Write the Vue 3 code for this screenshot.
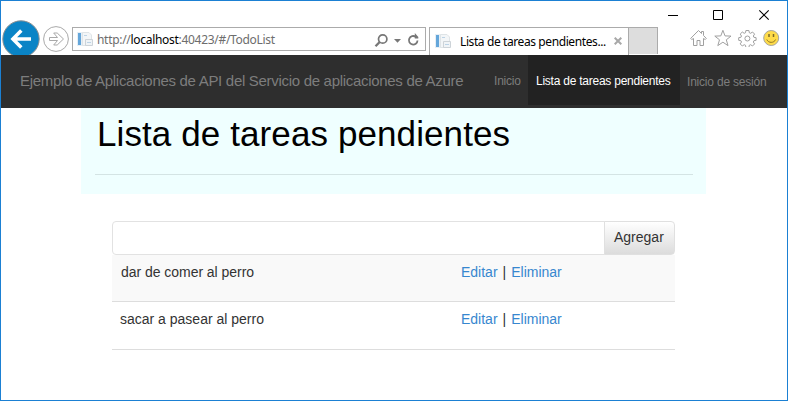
<script setup>
import { ref } from 'vue'

const draft = ref('')
const tasks = [
  { id: 1, name: 'dar de comer al perro' },
  { id: 2, name: 'sacar a pasear al perro' },
]
</script>

<template>
  <div class="window">
    <header class="chrome">
      <div class="back">
        <svg width="38" height="35" viewBox="0 0 38 35">
          <circle cx="19" cy="19" r="18.2" fill="#0a84c6" stroke="#8b8f92" stroke-width="1" />
          <path d="M29 19H12M19.300 10.600L10.900 19l8.400 8.400" fill="none" stroke="#fff" stroke-width="3.500" />
        </svg>
      </div>
      <svg class="forward" width="26" height="26" viewBox="0 0 26 26" fill="none" stroke="#a9a9a9">
        <circle cx="13" cy="13" r="12.400" />
        <path d="M6.500 11.500h8l-3.800-4.500h3.500l6.300 6-6.300 6h-3.500l3.800-4.500h-8z" />
      </svg>
      <div class="address">
        <svg class="page" width="17" height="17" viewBox="0 0 17 17">
          <path d="M0 1h6v14H0z" fill="#e6eff6" />
          <path d="M1 2h3v12H1z" fill="#64a6da" />
          <path d="M5.500 1.500h6.500l2.500 2.500v10.500h-9z" fill="#f3f6f8" stroke="#dfe4e7" />
          <path d="M7 4.500h3" stroke="#bcd3e6" />
          <path d="M8.500 8.500h7v6h-7z" fill="#f0f4f7" stroke="#cdd3d8" />
          <path d="M10 11.500h4" stroke="#bcd3e6" />
        </svg>
        <span class="url">http://<b>localhost</b>:40423/#/TodoList</span>
        <svg class="tools" width="48" height="16" viewBox="0 0 48 16" fill="none" stroke="#777">
          <circle cx="8.700" cy="6" r="4.200" stroke-width="1.700" />
          <path d="M5.700 9L1.500 13.300" stroke-width="2.300" />
          <path d="M20 6h7l-3.500 3.700z" fill="#777" stroke="none" />
          <path d="M41.700 3.800A4.300 4.300 0 1 0 43.500 7.500" stroke-width="1.800" />
          <path d="M40.800 0V5.500H44.300V4z" fill="#777" stroke="none" />
        </svg>
      </div>
      <div class="tab">
        <svg class="page" width="17" height="17" viewBox="0 0 17 17">
          <path d="M0 1h6v14H0z" fill="#e6eff6" />
          <path d="M1 2h3v12H1z" fill="#64a6da" />
          <path d="M5.500 1.500h6.500l2.500 2.500v10.500h-9z" fill="#f3f6f8" stroke="#dfe4e7" />
          <path d="M7 4.500h3" stroke="#bcd3e6" />
          <path d="M8.500 8.500h7v6h-7z" fill="#f0f4f7" stroke="#cdd3d8" />
          <path d="M10 11.500h4" stroke="#bcd3e6" />
        </svg>
        <span class="tab-title">Lista de tareas pendientes...</span>
        <svg class="tab-close" width="8" height="8" viewBox="0 0 8 8">
          <path d="M.7.7l6.600 6.600M7.300.7L.7 7.300" stroke="#a8a8a8" stroke-width="2" />
        </svg>
      </div>
      <div class="new-tab"></div>
      <div class="right">
        <svg class="controls" width="102" height="12" viewBox="0 0 102 12" fill="none" stroke="#000">
          <path d="M0 6.500h10" />
          <path d="M45.500 1.500h9v9h-9z" />
          <path d="M91.300 1.300l9.400 9.400M100.700 1.300l-9.400 9.400" stroke-width="1.100" />
        </svg>
        <svg class="actions" width="90" height="18" viewBox="0 0 90 18" fill="none" stroke="#a0a0a0">
          <path d="M.7 9.400L8.500 1.500l3 3V2.500h2v4l2.800 2.900-1 1.100-1.800-1v7h-3.500v-5H7v5H3.500v-7l-1.800 1z" />
          <path d="M32.900 1.300l2.100 5.600 6 .200-4.700 3.700 1.700 5.800-5.100-3.400-5.100 3.400 1.700-5.800-4.700-3.700 6-.2z" />
          <path d="M55.900 1.500h3l.4 2.200 1.300.6 1.900-1.300 2.100 2.100-1.300 1.900.6 1.300 2.200.4v2.600l-2.200.4-.6 1.300 1.300 1.900-2.100 2.100-1.900-1.300-1.300.6-.4 2.200h-3l-.4-2.200-1.300-.6-1.900 1.300-2.100-2.100 1.300-1.900-.6-1.300-2.200-.4V8.700l2.200-.4.6-1.300-1.300-1.900L52.300 3l1.900 1.300 1.300-.6z" />
          <circle cx="57.400" cy="9.500" r="2.500" />
          <circle cx="81.200" cy="9" r="7.500" fill="#ffdc4a" stroke="#a6a6a0" />
          <path d="M79 5v3M83.500 5v3" stroke="#7c6a2a" stroke-width="1.500" />
          <path d="M76.800 10.500c1.500 3.800 7.300 3.800 8.800 0" stroke="#8f7520" />
        </svg>
      </div>
    </header>

    <nav class="navbar">
      <a class="brand">Ejemplo de Aplicaciones de API del Servicio de aplicaciones de Azure</a>
      <a class="link home">Inicio</a>
      <a class="link active">Lista de tareas pendientes</a>
      <a class="link login">Inicio de sesión</a>
    </nav>

    <section class="hero">
      <h1><span>Lista de tareas pendientes</span></h1>
      <hr />
    </section>

    <main class="todo">
      <form class="add" @submit.prevent>
        <input v-model="draft" type="text" />
        <button type="submit"><span>Agregar</span></button>
      </form>
      <ul>
        <li v-for="task in tasks" :key="task.id">
          <span class="name">{{ task.name }}</span>
          <span class="links"><a class="edit">Editar</a><i>|</i><a class="remove">Eliminar</a></span>
        </li>
      </ul>
    </main>
  </div>
</template>

<style>
body {
  margin: 0;
  overflow: hidden;
}
</style>

<style scoped>
* {
  box-sizing: border-box;
}
.window {
  width: 788px;
  height: 401px;
  border: 1px solid #1b80d3;
  background: #fff;
  font-family: "Liberation Sans", Arial, sans-serif;
  color: #333;
  white-space: nowrap;
}
svg {
  display: block;
  flex: none;
}
.chrome {
  display: flex;
  height: 54px;
  font-family: "Noto Sans", sans-serif;
  font-size: 12px;
}
.back {
  width: 40px;
  padding: 19px 0 0 1px;
}
.forward {
  margin: 25px 3px 0 2px;
}
.address {
  display: flex;
  width: 354px;
  height: 24px;
  margin-top: 26px;
  padding-left: 4px;
  border: 1px solid #ababab;
}
.page {
  margin-top: 3px;
}
.url {
  width: 276px;
  margin-left: 3px;
  line-height: 24px;
  color: #6d6d6d;
  letter-spacing: -0.3px;
}
.url b {
  font-weight: 400;
  color: #000;
}
.tools {
  margin: 5px 0 0 1px;
}
.tab {
  display: flex;
  width: 200px;
  height: 28px;
  margin: 26px 0 0 3px;
  padding-left: 5px;
  border: 1px solid #ababab;
  border-bottom: 0;
}
.tab .page {
  margin-top: 5px;
}
.tab-title {
  width: 162px;
  padding-left: 8px;
  line-height: 28px;
  letter-spacing: -0.4px;
  color: #000;
}
.tab-close {
  margin-top: 9px;
}
.new-tab {
  width: 30px;
  height: 27px;
  margin: 26px 0 0 -1px;
  border: 1px solid #ababab;
  border-bottom: 0;
  background: #ddd;
}
.right {
  padding-top: 8px;
}
.controls {
  margin-left: 10px;
}
.actions {
  margin: 8px 0 0 32px;
}
.navbar {
  display: flex;
  height: 53px;
  background: #2e2e2e;
  color: #7d7d7d;
  line-height: 51px;
}
.brand {
  width: 473px;
  padding-left: 19px;
  font-size: 15px;
  letter-spacing: -0.3px;
}
.link {
  font-size: 12px;
  line-height: 53px;
  letter-spacing: -0.2px;
}
.home {
  width: 54px;
  padding-left: 20px;
}
.active {
  width: 152px;
  height: 50px;
  padding-left: 8px;
  background: #222;
  color: #fff;
  letter-spacing: -0.24px;
}
.login {
  padding-left: 7px;
  line-height: 54px;
}
.hero {
  width: 625px;
  height: 86px;
  margin-left: 80px;
  padding: 0 13px 0 14px;
  background: #efffff;
}
h1 {
  height: 66px;
  margin: 0;
  padding-left: 2px;
  font-size: 35px;
  line-height: 52px;
  font-weight: 400;
  letter-spacing: 0.1px;
  color: #000;
}
hr {
  height: 1px;
  margin: 0;
  border: 0;
  background: #d4e4e4;
}
.todo {
  width: 563px;
  margin: 27px 0 0 111px;
  font-size: 14px;
}
.add {
  display: flex;
  height: 34px;
}
input {
  width: 493px;
  border: 1px solid #e2e2e2;
  border-radius: 4px 0 0 4px;
  outline: 0;
}
button {
  width: 71px;
  margin-left: -1px;
  padding: 0 0 2px 9px;
  border: 1px solid #e0e0e0;
  border-radius: 0 4px 4px 0;
  background: linear-gradient(#fff, #dcdcdc);
  font: inherit;
  color: #333;
  text-align: left;
}
ul {
  margin: 0;
  padding: 0;
  list-style: none;
}
li {
  display: flex;
  height: 48px;
  padding-left: 8px;
  border-bottom: 1px solid #ddd;
  line-height: 34px;
}
li:first-child {
  height: 47px;
  padding-left: 9px;
  background: #f9f9f9;
}
.name {
  width: 341px;
}
li:first-child .name {
  width: 340px;
  letter-spacing: -0.04px;
}
.links a {
  color: #3787cf;
}
.links i {
  margin: 0 5px;
  font-style: normal;
}
</style>
